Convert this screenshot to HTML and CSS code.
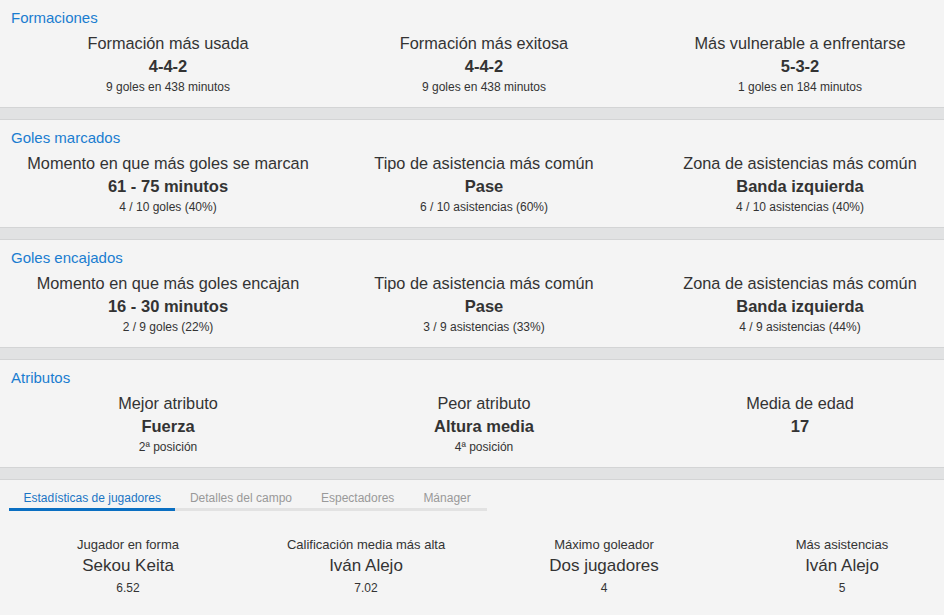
FILE: index.html
```html
<!DOCTYPE html>
<html lang="es">
<head>
    <meta charset="UTF-8">
    <title>Estadísticas del equipo</title>
    <link rel="stylesheet" href="styles.css">
</head>
<body>

<div class="page">

    <!-- Formaciones -->
    <div class="section">
        <h2 class="section-title">Formaciones</h2>
        <div class="stat-row">
            <div class="stat">
                <div class="stat-label">Formación más usada</div>
                <div class="stat-value">4-4-2</div>
                <div class="stat-note">9 goles en 438 minutos</div>
            </div>
            <div class="stat">
                <div class="stat-label">Formación más exitosa</div>
                <div class="stat-value">4-4-2</div>
                <div class="stat-note">9 goles en 438 minutos</div>
            </div>
            <div class="stat">
                <div class="stat-label">Más vulnerable a enfrentarse</div>
                <div class="stat-value">5-3-2</div>
                <div class="stat-note">1 goles en 184 minutos</div>
            </div>
        </div>
    </div>
    <div class="divider"></div>

    <!-- Goles marcados -->
    <div class="section">
        <h2 class="section-title">Goles marcados</h2>
        <div class="stat-row">
            <div class="stat">
                <div class="stat-label">Momento en que más goles se marcan</div>
                <div class="stat-value">61 - 75 minutos</div>
                <div class="stat-note">4 / 10 goles (40%)</div>
            </div>
            <div class="stat">
                <div class="stat-label">Tipo de asistencia más común</div>
                <div class="stat-value">Pase</div>
                <div class="stat-note">6 / 10 asistencias (60%)</div>
            </div>
            <div class="stat">
                <div class="stat-label">Zona de asistencias más común</div>
                <div class="stat-value">Banda izquierda</div>
                <div class="stat-note">4 / 10 asistencias (40%)</div>
            </div>
        </div>
    </div>
    <div class="divider"></div>

    <!-- Goles encajados -->
    <div class="section">
        <h2 class="section-title">Goles encajados</h2>
        <div class="stat-row">
            <div class="stat">
                <div class="stat-label">Momento en que más goles encajan</div>
                <div class="stat-value">16 - 30 minutos</div>
                <div class="stat-note">2 / 9 goles (22%)</div>
            </div>
            <div class="stat">
                <div class="stat-label">Tipo de asistencia más común</div>
                <div class="stat-value">Pase</div>
                <div class="stat-note">3 / 9 asistencias (33%)</div>
            </div>
            <div class="stat">
                <div class="stat-label">Zona de asistencias más común</div>
                <div class="stat-value">Banda izquierda</div>
                <div class="stat-note">4 / 9 asistencias (44%)</div>
            </div>
        </div>
    </div>
    <div class="divider"></div>

    <!-- Atributos -->
    <div class="section">
        <h2 class="section-title">Atributos</h2>
        <div class="stat-row">
            <div class="stat">
                <div class="stat-label">Mejor atributo</div>
                <div class="stat-value">Fuerza</div>
                <div class="stat-note">2ª posición</div>
            </div>
            <div class="stat">
                <div class="stat-label">Peor atributo</div>
                <div class="stat-value">Altura media</div>
                <div class="stat-note">4ª posición</div>
            </div>
            <div class="stat">
                <div class="stat-label">Media de edad</div>
                <div class="stat-value">17</div>
                <div class="stat-note"></div>
            </div>
        </div>
    </div>
    <div class="divider"></div>

    <!-- Pestañas -->
    <div class="tabs-section">
        <div class="tabs">
            <a href="#" class="tab active">Estadísticas de jugadores</a>
            <a href="#" class="tab">Detalles del campo</a>
            <a href="#" class="tab">Espectadores</a>
            <a href="#" class="tab">Mánager</a>
        </div>

        <div class="player-row">
            <div class="player-stat">
                <div class="player-label">Jugador en forma</div>
                <div class="player-name">Sekou Keita</div>
                <div class="player-value">6.52</div>
            </div>
            <div class="player-stat">
                <div class="player-label">Calificación media más alta</div>
                <div class="player-name">Iván Alejo</div>
                <div class="player-value">7.02</div>
            </div>
            <div class="player-stat">
                <div class="player-label">Máximo goleador</div>
                <div class="player-name">Dos jugadores</div>
                <div class="player-value">4</div>
            </div>
            <div class="player-stat">
                <div class="player-label">Más asistencias</div>
                <div class="player-name">Iván Alejo</div>
                <div class="player-value">5</div>
            </div>
        </div>
    </div>

</div>

</body>
</html>
```

FILE: styles.css
```css
body {
    font-family: "Liberation Sans", Arial, sans-serif;
    background-color: #f4f4f4;
    color: #333;
    margin: 0;
    padding: 0;
}

.page {
    width: 944px;
    overflow: hidden;
}

.section {
    height: 107px;
    padding: 9px 0 0 10px;
    box-sizing: border-box;
}

.section-title {
    margin: 0;
    font-size: 15px;
    font-weight: normal;
    line-height: 18px;
    color: #1a7dd0;
    padding-left: 1px;
}

.stat-row {
    display: grid;
    grid-template-columns: repeat(3, 316px);
    margin-top: 5px;
}

.stat {
    text-align: center;
    white-space: nowrap;
}

.stat-label {
    font-size: 16.3px;
    line-height: 22px;
}

.stat-value {
    font-size: 16.5px;
    font-weight: bold;
    line-height: 23px;
    padding-top: 1px;
}

.stat-note {
    font-size: 12px;
    line-height: 18px;
}

.divider {
    height: 11px;
    background-color: #e1e2e3;
    border-top: 1px solid #d3d4d5;
    border-bottom: 1px solid #d3d4d5;
}

.tabs-section {
    padding: 9px 0 0 9px;
}

.tabs {
    display: flex;
    width: 478px;
    border-bottom: 3px solid #e2e2e2;
}

.tab {
    font-size: 12px;
    color: #999;
    text-decoration: none;
    padding: 2px 14.5px 3px;
    margin-bottom: -3px;
    border-bottom: 3px solid transparent;
}

.tab.active {
    color: #1a74c4;
    border-bottom-color: #0a6fc2;
}

.player-row {
    display: grid;
    grid-template-columns: repeat(4, 238px);
    margin-top: 24px;
}

.player-stat {
    text-align: center;
    white-space: nowrap;
}

.player-label {
    font-size: 13px;
    line-height: 20px;
}

.player-name {
    font-size: 17px;
    line-height: 22px;
}

.player-value {
    font-size: 12px;
    line-height: 22px;
}
```
